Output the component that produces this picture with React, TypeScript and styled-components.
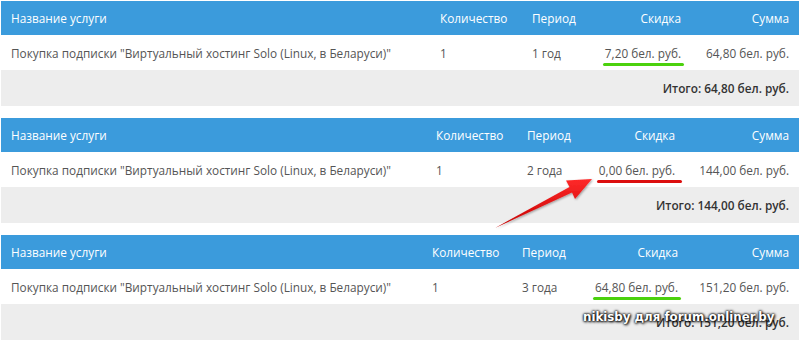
import React from "react";
import styled, { createGlobalStyle } from "styled-components";

const Global = createGlobalStyle`
  html, body { margin: 0; padding: 0; background: #fff; }
  body { font-family: "Open Sans", "Liberation Sans", sans-serif; }
`;

const Page = styled.div`
  position: relative;
  width: 800px;
  height: 341px;
  overflow: hidden;
  padding: 1px 1px 0 1px;
  box-sizing: border-box;
  display: flex;
  flex-direction: column;
  gap: 12px;
`;

const Table = styled.div<{ $cols: string }>`
  display: grid;
  grid-template-columns: ${(p) => p.$cols};
  font-size: 11.8px;
`;

const HeadCell = styled.div<{ $right?: boolean }>`
  height: 34px;
  background: #3b9bdc;
  color: #fff;
  display: flex;
  align-items: center;
  justify-content: ${(p) => (p.$right ? "flex-end" : "flex-start")};
  padding: 0 10px;
  white-space: nowrap;
`;

const Cell = styled.div<{ $right?: boolean }>`
  height: 35px;
  background: #fff;
  color: #555;
  display: flex;
  align-items: center;
  justify-content: ${(p) => (p.$right ? "flex-end" : "flex-start")};
  padding: 0 10px;
  white-space: nowrap;
`;

const TotalRow = styled.div`
  grid-column: 1 / -1;
  height: 36px;
  background: #ededed;
  color: #333;
  font-weight: 600;
  display: flex;
  align-items: center;
  justify-content: flex-end;
  padding: 0 10px;
`;

const Mark = styled.span<{ $color: string; $extra?: number }>`
  position: relative;
  &::after {
    content: "";
    position: absolute;
    left: -2px;
    right: ${(p) => -3 - (p.$extra ?? 0)}px;
    bottom: -5px;
    height: 3px;
    border-radius: 2px;
    background: ${(p) => p.$color};
  }
`;

const Overlay = styled.svg`
  position: absolute;
  left: 0;
  top: 0;
  pointer-events: none;
`;

const Watermark = styled.div`
  position: absolute;
  left: 583px;
  top: 310px;
  font-family: "DejaVu Sans", sans-serif;
  font-weight: bold;
  font-size: 11.8px;
  color: #fff;
  white-space: nowrap;
  text-shadow: 0 0 2px #000, 0 0 3px #000, 1px 1px 3px #000;
`;

type Row = {
  cols: string;
  period: string;
  discount: string;
  sum: string;
  total: string;
  mark: string;
  extra: number;
};

const rows: Row[] = [
  { cols: "429px 92px 70px 99px 108px", period: "1 год", discount: "7,20 бел. руб.", sum: "64,80 бел. руб.", total: "Итого: 64,80 бел. руб.", mark: "#4bd10d", extra: 0 },
  { cols: "425px 91px 72px 96px 114px", period: "2 года", discount: "0,00 бел. руб.", sum: "144,00 бел. руб.", total: "Итого: 144,00 бел. руб.", mark: "#dc0f0f", extra: 4 },
  { cols: "421px 90px 76px 100px 111px", period: "3 года", discount: "64,80 бел. руб.", sum: "151,20 бел. руб.", total: "Итого: 151,20 бел. руб.", mark: "#4bd10d", extra: 0 },
];

export default function App() {
  return (
    <>
      <Global />
      <Page>
        {rows.map((r, i) => (
          <Table key={i} $cols={r.cols}>
            <HeadCell>Название услуги</HeadCell>
            <HeadCell>Количество</HeadCell>
            <HeadCell>Период</HeadCell>
            <HeadCell $right>Скидка</HeadCell>
            <HeadCell $right>Сумма</HeadCell>
            <Cell>Покупка подписки "Виртуальный хостинг Solo (Linux, в Беларуси)"</Cell>
            <Cell>1</Cell>
            <Cell>{r.period}</Cell>
            <Cell $right>
              <Mark $color={r.mark} $extra={r.extra}>{r.discount}</Mark>
            </Cell>
            <Cell $right>{r.sum}</Cell>
            <TotalRow>{r.total}</TotalRow>
          </Table>
        ))}
        <Overlay width="800" height="341" viewBox="0 0 800 341">
          <defs>
            <linearGradient id="ar" x1="0" y1="0" x2="0" y2="1">
              <stop offset="0" stopColor="#ff2a2a" />
              <stop offset="1" stopColor="#c40000" />
            </linearGradient>
            <filter id="sh" x="-20%" y="-20%" width="140%" height="140%">
              <feDropShadow dx="1" dy="1" stdDeviation="1" floodColor="#000" floodOpacity="0.35" />
            </filter>
          </defs>
          <polygon
            points="495,228 569.5,187 566,180.5 592,179 575,199 572,192.5"
            fill="url(#ar)"
            filter="url(#sh)"
          />
        </Overlay>
        <Watermark>nikisby для forum.onliner.by</Watermark>
      </Page>
    </>
  );
}
